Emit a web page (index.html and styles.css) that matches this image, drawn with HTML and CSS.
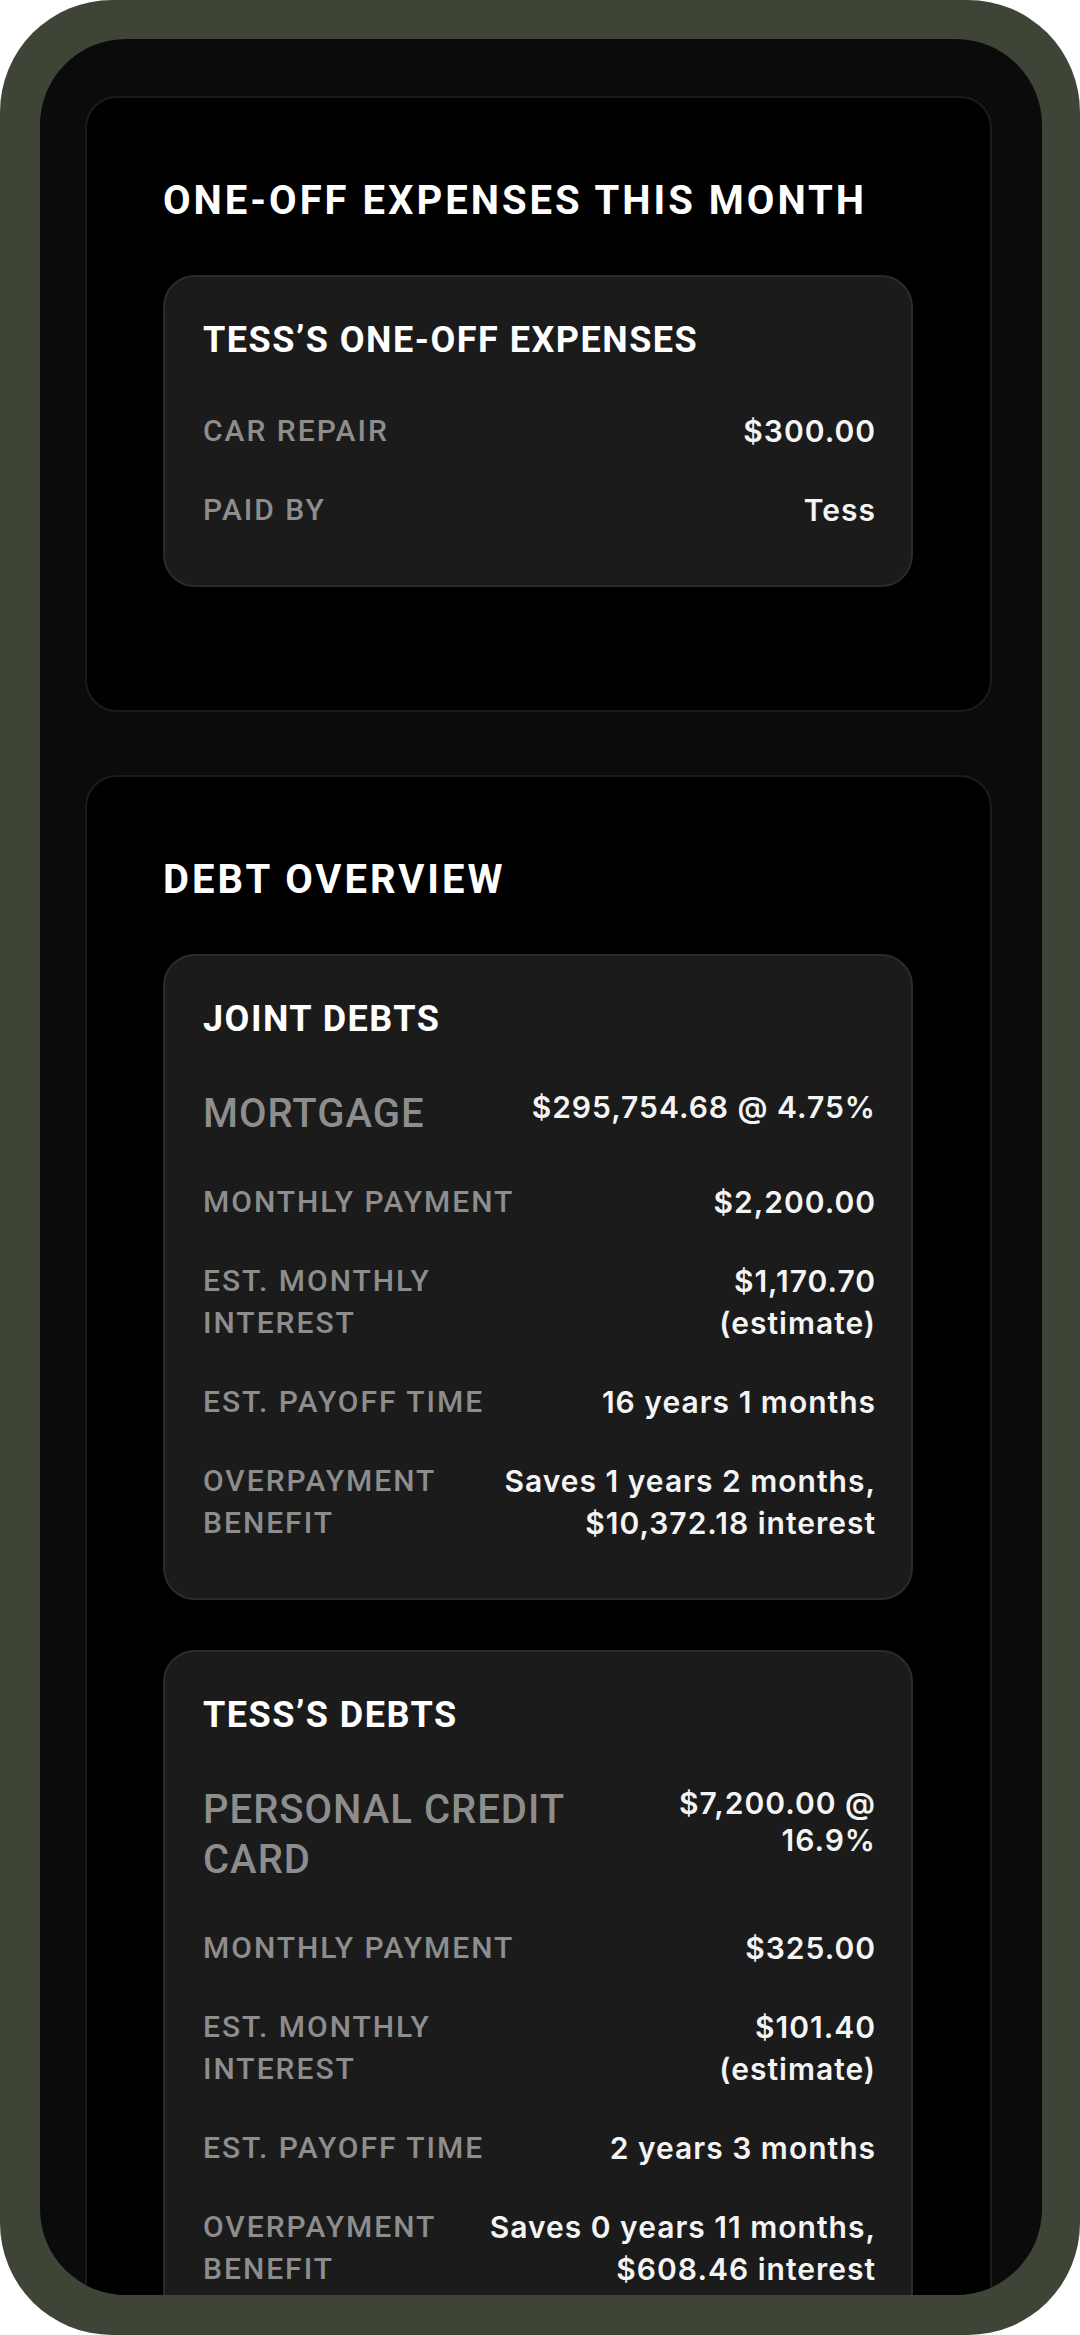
FILE: index.html
```html
<!DOCTYPE html>
<html lang="en">
<head>
<meta charset="utf-8">
<title>Budget – Expenses and Debts</title>
<link rel="stylesheet" href="styles.css">
</head>
<body>
<div class="device">
  <div class="screen">
    <section class="panel">
      <h2 class="panel-title">ONE-OFF EXPENSES THIS MONTH</h2>
      <div class="card">
        <h3 class="card-title">TESS’S ONE-OFF EXPENSES</h3>
        <div class="rows">
          <div class="row"><span class="label">CAR REPAIR</span><span class="value">$300.00</span></div>
          <div class="row"><span class="label">PAID BY</span><span class="value">Tess</span></div>
        </div>
      </div>
    </section>

    <section class="panel">
      <h2 class="panel-title">DEBT OVERVIEW</h2>
      <div class="card">
        <h3 class="card-title">JOINT DEBTS</h3>
        <div class="rows">
          <div class="row row-head"><span class="label">MORTGAGE</span><span class="value">$295,754.68 @ 4.75%</span></div>
          <div class="row"><span class="label">MONTHLY PAYMENT</span><span class="value">$2,200.00</span></div>
          <div class="row"><span class="label">EST. MONTHLY INTEREST</span><span class="value">$1,170.70 (estimate)</span></div>
          <div class="row"><span class="label">EST. PAYOFF TIME</span><span class="value">16 years 1 months</span></div>
          <div class="row"><span class="label">OVERPAYMENT BENEFIT</span><span class="value">Saves 1 years 2 months, $10,372.18 interest</span></div>
        </div>
      </div>
      <div class="card">
        <h3 class="card-title">TESS’S DEBTS</h3>
        <div class="rows">
          <div class="row row-head"><span class="label">PERSONAL CREDIT CARD</span><span class="value">$7,200.00 @ 16.9%</span></div>
          <div class="row"><span class="label">MONTHLY PAYMENT</span><span class="value">$325.00</span></div>
          <div class="row"><span class="label">EST. MONTHLY INTEREST</span><span class="value">$101.40 (estimate)</span></div>
          <div class="row"><span class="label">EST. PAYOFF TIME</span><span class="value">2 years 3 months</span></div>
          <div class="row"><span class="label">OVERPAYMENT BENEFIT</span><span class="value">Saves 0 years 11 months, $608.46 interest</span></div>
        </div>
      </div>
    </section>
  </div>
</div>
</body>
</html>
```

FILE: styles.css
```css
* {
  box-sizing: border-box;
}

html, body {
  margin: 0;
  padding: 0;
  background: #ffffff;
}

body {
  width: 1080px;
  height: 2335px;
  overflow: hidden;
  font-family: Roboto, "Liberation Sans", Arial, sans-serif;
}

.device {
  width: 1080px;
  height: 2335px;
  background: #3e4536;
  border-radius: 112px;
  padding: 39px 38px 40px 40px;
  display: flex;
}

.screen {
  flex: 1;
  background: #0b0b0b;
  border-radius: 86px;
  overflow: hidden;
  padding: 57px 50px 0 45px;
}

.panel {
  background: #000000;
  border: 2px solid #1b1b1b;
  border-radius: 32px;
  padding: 79px 77px 73px 76px;
  margin-bottom: 63px;
}

.panel-title {
  margin: 0 0 50px 0;
  font-family: Roboto, "Liberation Sans", sans-serif;
  font-weight: 700;
  font-size: 40px;
  line-height: 48px;
  letter-spacing: 3px;
  color: #ffffff;
}

.card {
  background: #1b1b1b;
  border: 2px solid #2b2b2b;
  border-radius: 32px;
  padding: 42px 35px 54px 38px;
  margin-bottom: 50px;
}

.card-title {
  margin: 0 0 48px 0;
  font-family: Roboto, "Liberation Sans", sans-serif;
  font-weight: 700;
  font-size: 36px;
  line-height: 43px;
  letter-spacing: 1.5px;
  color: #ffffff;
}

.rows {
  display: flex;
  flex-direction: column;
  gap: 37px;
}

.row {
  display: flex;
  justify-content: space-between;
  align-items: flex-start;
  gap: 16px;
}

.label {
  flex: 0 1 auto;
  font-family: Roboto, "Liberation Sans", sans-serif;
  font-weight: 500;
  font-size: 30px;
  line-height: 42px;
  letter-spacing: 2px;
  color: #8d8d8d;
}

.value {
  flex: 0 1 auto;
  text-align: right;
  font-family: Inter, "Noto Sans", sans-serif;
  font-weight: 600;
  font-size: 30px;
  line-height: 42px;
  letter-spacing: 1px;
  color: #f4f4f4;
}

.row-head {
  margin-bottom: 5px;
}

.row-head .label {
  font-size: 40px;
  line-height: 50px;
  letter-spacing: 1px;
}

.row-head .value {
  line-height: 37px;
}
```
